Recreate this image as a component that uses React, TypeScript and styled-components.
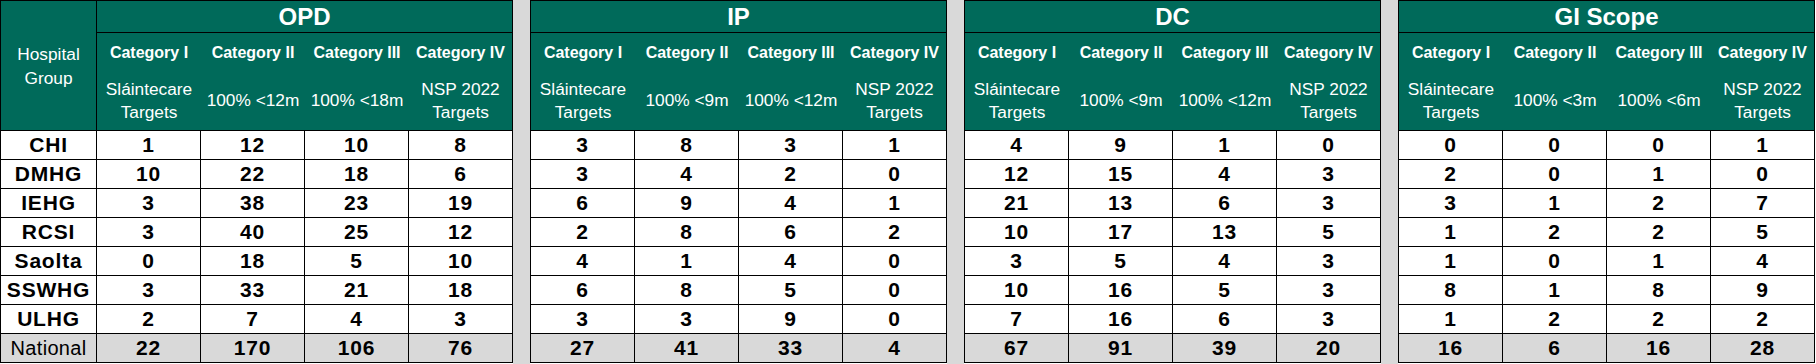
import * as React from "react";
import styled, { createGlobalStyle } from "styled-components";

interface Section {
  title: string;
  targets: string[][];
  rows: number[][];
}

const groups = ["CHI", "DMHG", "IEHG", "RCSI", "Saolta", "SSWHG", "ULHG"];
const categories = ["Category I", "Category II", "Category III", "Category IV"];

const sections: Section[] = [
  {
    title: "OPD",
    targets: [["Sláintecare", "Targets"], ["100% <12m"], ["100% <18m"], ["NSP 2022", "Targets"]],
    rows: [
      [1, 12, 10, 8],
      [10, 22, 18, 6],
      [3, 38, 23, 19],
      [3, 40, 25, 12],
      [0, 18, 5, 10],
      [3, 33, 21, 18],
      [2, 7, 4, 3],
      [22, 170, 106, 76],
    ],
  },
  {
    title: "IP",
    targets: [["Sláintecare", "Targets"], ["100% <9m"], ["100% <12m"], ["NSP 2022", "Targets"]],
    rows: [
      [3, 8, 3, 1],
      [3, 4, 2, 0],
      [6, 9, 4, 1],
      [2, 8, 6, 2],
      [4, 1, 4, 0],
      [6, 8, 5, 0],
      [3, 3, 9, 0],
      [27, 41, 33, 4],
    ],
  },
  {
    title: "DC",
    targets: [["Sláintecare", "Targets"], ["100% <9m"], ["100% <12m"], ["NSP 2022", "Targets"]],
    rows: [
      [4, 9, 1, 0],
      [12, 15, 4, 3],
      [21, 13, 6, 3],
      [10, 17, 13, 5],
      [3, 5, 4, 3],
      [10, 16, 5, 3],
      [7, 16, 6, 3],
      [67, 91, 39, 20],
    ],
  },
  {
    title: "GI Scope",
    targets: [["Sláintecare", "Targets"], ["100% <3m"], ["100% <6m"], ["NSP 2022", "Targets"]],
    rows: [
      [0, 0, 0, 1],
      [2, 0, 1, 0],
      [3, 1, 2, 7],
      [1, 2, 2, 5],
      [1, 0, 1, 4],
      [8, 1, 8, 9],
      [1, 2, 2, 2],
      [16, 6, 16, 28],
    ],
  },
];

export default function App() {
  return (
    <>
      <GlobalStyle />
      <Sheet>
        <HospitalBlock>
          <HospitalHeader>
            Hospital
            <br />
            Group
          </HospitalHeader>
          {groups.map((g) => (
            <GroupCell key={g}>{g}</GroupCell>
          ))}
          <GroupCell $total>National</GroupCell>
        </HospitalBlock>
        {sections.map((s, i) => (
          <React.Fragment key={s.title}>
            {i > 0 && <Gap />}
            <SectionBlock $first={i === 0}>
              <SectionTitle>{s.title}</SectionTitle>
              <HeaderRow>
                {categories.map((c, j) => (
                  <HeaderCell key={c}>
                    <CategoryLabel>{c}</CategoryLabel>
                    <TargetLabel>
                      {s.targets[j].map((line) => (
                        <span key={line}>{line}</span>
                      ))}
                    </TargetLabel>
                  </HeaderCell>
                ))}
              </HeaderRow>
              {s.rows.map((row, r) => (
                <DataRow key={r} $total={r === s.rows.length - 1}>
                  {row.map((v, k) => (
                    <ValueCell key={k}>{v}</ValueCell>
                  ))}
                </DataRow>
              ))}
            </SectionBlock>
          </React.Fragment>
        ))}
      </Sheet>
    </>
  );
}

const GlobalStyle = createGlobalStyle`
  html, body {
    margin: 0;
    padding: 0;
    background: #ffffff;
  }
  body {
    font-family: "Liberation Sans", Arial, sans-serif;
  }
`;

const teal = "#006a5a";
const grey = "#d9d9d9";

const Sheet = styled.div`
  display: flex;
  align-items: flex-start;
  height: 364px;
  width: 1816px;
  overflow: hidden;
`;

const HospitalBlock = styled.div`
  display: flex;
  flex-direction: column;
  width: 97px;
  box-sizing: border-box;
  border-top: 1px solid #000;
  border-left: 1px solid #000;
  border-right: 1px solid #000;
`;

const HospitalHeader = styled.div`
  height: 130px;
  box-sizing: border-box;
  border-bottom: 1px solid #000;
  background: ${teal};
  color: #fff;
  font-size: 17.3px;
  line-height: 24px;
  display: flex;
  align-items: center;
  justify-content: center;
  text-align: center;
`;

const GroupCell = styled.div<{ $total?: boolean }>`
  height: 29px;
  box-sizing: border-box;
  border-bottom: 1px solid #000;
  background: ${(p) => (p.$total ? grey : "#fff")};
  font-size: ${(p) => (p.$total ? "20px" : "21px")};
  font-weight: ${(p) => (p.$total ? 400 : 700)};
  letter-spacing: ${(p) => (p.$total ? "0.3px" : "0.8px")};
  display: flex;
  align-items: center;
  justify-content: center;
  color: #000;
  white-space: nowrap;
`;

const Gap = styled.div`
  align-self: stretch;
  width: 17px;
  flex: none;
  background: ${grey};
`;

const SectionBlock = styled.div<{ $first?: boolean }>`
  display: flex;
  flex-direction: column;
  flex: none;
  width: ${(p) => (p.$first ? 416 : 417)}px;
  box-sizing: border-box;
  border-top: 1px solid #000;
  border-left: ${(p) => (p.$first ? "none" : "1px solid #000")};
`;

const SectionTitle = styled.div`
  height: 32px;
  box-sizing: border-box;
  border-bottom: 1px solid #000;
  border-right: 1px solid #000;
  background: ${teal};
  color: #fff;
  font-size: 24px;
  font-weight: 700;
  display: flex;
  align-items: center;
  justify-content: center;
`;

const HeaderRow = styled.div`
  display: flex;
  height: 98px;
  box-sizing: border-box;
  border-bottom: 1px solid #000;
  border-right: 1px solid #000;
  background: ${teal};
  color: #fff;
`;

const HeaderCell = styled.div`
  width: 104px;
  display: flex;
  flex-direction: column;
  &:last-child {
    width: 103px;
  }
`;

const CategoryLabel = styled.div`
  height: 40px;
  display: flex;
  align-items: center;
  justify-content: center;
  font-size: 16px;
  font-weight: 700;
  white-space: nowrap;
`;

const TargetLabel = styled.div`
  flex: 1;
  display: flex;
  flex-direction: column;
  align-items: center;
  justify-content: center;
  font-size: 17.3px;
  line-height: 23px;
  white-space: nowrap;
  padding-bottom: 2px;
`;

const DataRow = styled.div<{ $total?: boolean }>`
  display: flex;
  height: 29px;
  box-sizing: border-box;
  border-bottom: 1px solid #000;
  background: ${(p) => (p.$total ? grey : "#fff")};
`;

const ValueCell = styled.div`
  width: 104px;
  box-sizing: border-box;
  border-right: 1px solid #000;
  display: flex;
  align-items: center;
  justify-content: center;
  font-size: 21px;
  font-weight: 700;
  letter-spacing: 0.8px;
  color: #000;
`;
